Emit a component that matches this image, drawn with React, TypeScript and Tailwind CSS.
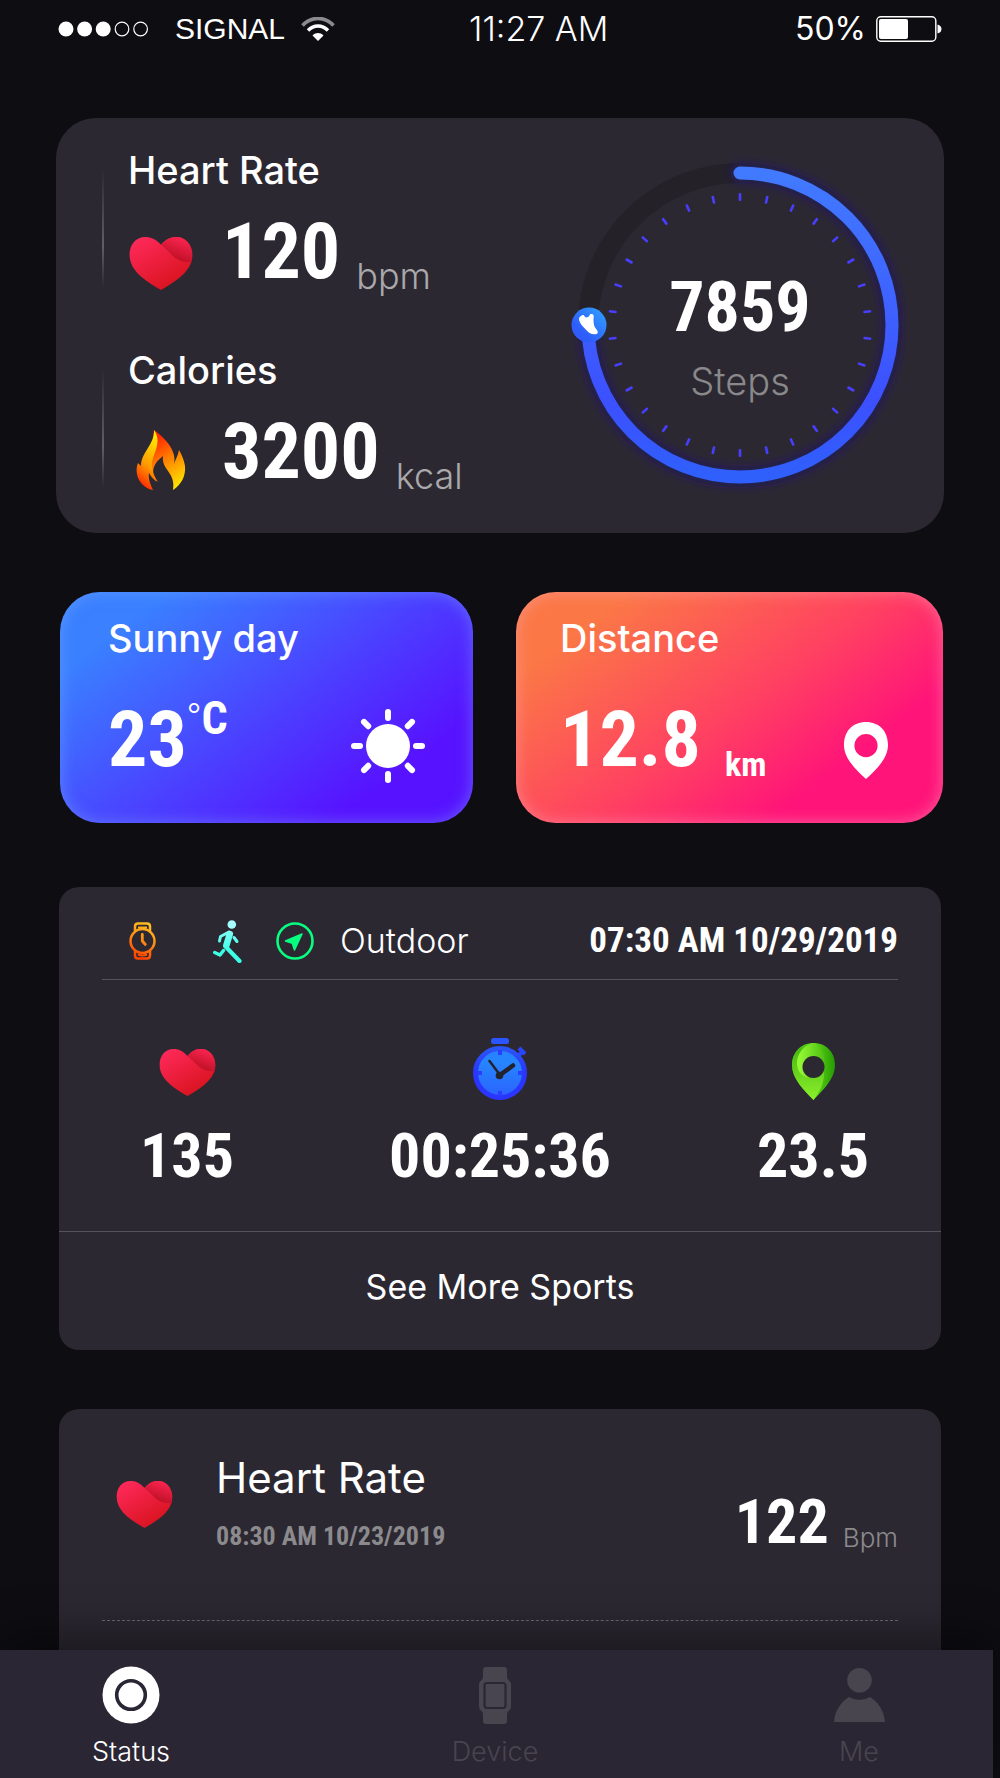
import { useId } from "react";
import type { ReactNode } from "react";

const digits = "font-['Roboto_Condensed','Liberation_Sans_Narrow',sans-serif] font-bold";

function HeartIcon({ className }: { className: string }) {
  const id = useId();
  return (
    <svg viewBox="0 0 64 54" className={className} aria-hidden="true">
      <defs>
        <linearGradient id={id + "a"} x1="0.1" y1="0" x2="0.8" y2="1">
          <stop offset="0" stopColor="#ff2a5c" />
          <stop offset="1" stopColor="#d51118" />
        </linearGradient>
        <linearGradient id={id + "b"} x1="0.8" y1="0" x2="0.45" y2="0.8">
          <stop offset="0" stopColor="#ff2754" />
          <stop offset="1" stopColor="#c5122a" />
        </linearGradient>
      </defs>
      <path fill={`url(#${id}a)`} d="M32 8C27 2 21 0 16 0 6 0 0 8 0 18c0 15 13 25 32 36 19-11 32-21 32-36C64 8 57 0 48 0c-6 0-11 2-16 8Z" />
      <path fill={`url(#${id}b)`} d="M32 8c11 9 17 20 31 17C66 9 57 0 48 0c-6 0-11 2-16 8Z" />
    </svg>
  );
}

function FlameIcon() {
  return (
    <svg viewBox="0 0 50 60" className="h-[60px] w-[50px]" aria-hidden="true">
      <defs>
        <linearGradient id="flameRight" x1="0.3" y1="0" x2="0.7" y2="1">
          <stop offset="0.1" stopColor="#ff2a00" />
          <stop offset="0.5" stopColor="#ff8200" />
          <stop offset="1" stopColor="#ffe600" />
        </linearGradient>
        <linearGradient id="flameLeft" x1="0.7" y1="0" x2="0.4" y2="1">
          <stop offset="0" stopColor="#fff000" />
          <stop offset="0.6" stopColor="#ff9a00" />
          <stop offset="1" stopColor="#ff2200" />
        </linearGradient>
      </defs>
      <path fill="url(#flameRight)" d="M18 0c12 9 23 21 20 34 1-4 4-8 5-14 3 5 5 10 6 16 1 10-4 19-12 24 3-18-12-20-10-34-9 7-13 14-7 26L12 40Z" />
      <path fill="url(#flameLeft)" d="M18 0c1 14-13 22-13 36l-3-3C-3 46 6 58 17 60c-3-6-5-12-4-17 2 4 5 7 9 9-5-8-8-14-5-24 3-9 8-18 1-28Z" />
    </svg>
  );
}

function PinIcon({ className }: { className: string }) {
  return (
    <svg viewBox="0 0 44 57" className={className} aria-hidden="true">
      <path fill="currentColor" fillRule="evenodd" d="M22 0C9 0 0 9 0 23c0 13 11 24 22 34 11-10 22-21 22-34C44 9 35 0 22 0Zm0 12a11.6 11.6 0 1 1 0 23.2a11.6 11.6 0 0 1 0-23.2Z" />
    </svg>
  );
}

function GreenPinIcon() {
  return (
    <svg viewBox="0 0 43 57" className="h-[57px] w-[43px]" aria-hidden="true">
      <defs>
        <linearGradient id="pinBase" x1="0" y1="0" x2="1" y2="0">
          <stop offset="0" stopColor="#3eae10" />
          <stop offset="0.5" stopColor="#62d81a" />
          <stop offset="1" stopColor="#259a03" />
        </linearGradient>
        <linearGradient id="pinTip" x1="0" y1="0" x2="0" y2="1">
          <stop offset="0" stopColor="#47b80f" />
          <stop offset="1" stopColor="#8cf02c" />
        </linearGradient>
        <linearGradient id="pinShine" x1="0" y1="0.4" x2="1" y2="0.4">
          <stop offset="0.1" stopColor="#93f733" />
          <stop offset="1" stopColor="#4cc012" />
        </linearGradient>
      </defs>
      <path fill="url(#pinBase)" d="M21.5 0C9 0 0 9 0 22c0 14 12 25 21.5 35C31 47 43 36 43 22 43 9 34 0 21.5 0Z" />
      <path fill="url(#pinTip)" d="M0 22c0 14 12 25 21.5 35C28 48 33 40 32 26c-4 10-14 12-21 6C5 27 5 14 10 4 4 8 0 14 0 22Z" />
      <path fill="url(#pinShine)" d="M21.5 0C12 2 4 11 5 22c1 7 5 12 12 13l4-11 11-2C34 14 30 4 21.5 0Z" />
      <circle cx="21.5" cy="24" r="11" fill="#2c2832" />
    </svg>
  );
}

function StopwatchIcon() {
  return (
    <svg viewBox="0 0 54 62" className="h-[62px] w-[54px]" aria-hidden="true">
      <defs>
        <linearGradient id="watchFace" x1="0" y1="0" x2="0" y2="1">
          <stop offset="0.3" stopColor="#2684ff" />
          <stop offset="1" stopColor="#2b62ff" />
        </linearGradient>
        <linearGradient id="watchRim" x1="0" y1="0" x2="0" y2="1">
          <stop offset="0" stopColor="#2a55f5" />
          <stop offset="0.5" stopColor="#2a35ff" />
        </linearGradient>
      </defs>
      <rect x="18" y="0" width="18" height="6" rx="2.5" fill="#2a55ff" />
      <path d="m46 10 6 6M45 18l4-4" stroke="#2a45ff" strokeWidth="4" />
      <circle cx="27" cy="35" r="24.5" fill="url(#watchFace)" stroke="url(#watchRim)" strokeWidth="5" />
      <path d="M27 12v5M27 53v5M4 35h5M45 35h5" stroke="#2a3dff" strokeWidth="4" />
      <path d="M27 37 16.5 23" stroke="#232330" strokeWidth="2.5" strokeLinecap="round" />
      <path d="M25.5 38 40 27.5" stroke="#232330" strokeWidth="4.5" strokeLinecap="round" />
      <circle cx="26.5" cy="37.5" r="3.8" fill="#232330" />
    </svg>
  );
}

function WatchIcon() {
  return (
    <svg viewBox="0 0 27 38" className="h-[38px] w-[27px]" fill="none" stroke="url(#band)" aria-hidden="true">
      <defs>
        <linearGradient id="band" gradientUnits="userSpaceOnUse" x1="22" y1="0" x2="6" y2="38">
          <stop offset="0" stopColor="#ffc823" />
          <stop offset="0.5" stopColor="#ff8a12" />
          <stop offset="0.9" stopColor="#ff4300" />
        </linearGradient>
      </defs>
      <circle cx="13.5" cy="19" r="12" strokeWidth="2.5" />
      <path strokeWidth="2.5" d="M6 9V4.500Q6 1.500 9 1.500h9q3 0 3 3V9M6 29v4.500q0 3 3 3h9q3 0 3-3V29" />
      <path strokeWidth="2" d="M9 5.500h9M9 32.500q4.500 2 9 0" />
      <path strokeWidth="2.8" strokeLinecap="round" strokeLinejoin="round" d="M13.300 12.500V19l3 3.500" />
    </svg>
  );
}

function RunnerIcon() {
  return (
    <svg viewBox="0 0 29 43" className="h-[43px] w-[29px]" fill="none" stroke="url(#runner)" strokeLinecap="round" strokeLinejoin="round" aria-hidden="true">
      <defs>
        <linearGradient id="runner" gradientUnits="userSpaceOnUse" x1="0" y1="0" x2="0" y2="43">
          <stop offset="0" stopColor="#a5fdff" />
          <stop offset="0.7" stopColor="#3dffe6" />
        </linearGradient>
      </defs>
      <circle cx="18.8" cy="4.5" r="4.3" fill="#a5fdff" stroke="none" />
      <path strokeWidth="6.5" d="m16.800 14-3.500 11.500" />
      <path strokeWidth="3" d="M16 12 7.500 16.500l-1 4.500M21 17.500l3 4" />
      <path strokeWidth="4.2" d="m13 27 13.500 14" />
      <path strokeWidth="3.4" d="M10.500 30.500 7 35l-5.300-2.500" />
    </svg>
  );
}

function CompassIcon() {
  return (
    <svg viewBox="0 0 38 38" className="size-[38px]" aria-hidden="true">
      <circle cx="19" cy="19" r="17.5" fill="none" stroke="#07ff80" strokeWidth="2.6" />
      <path d="M26 12 18.500 28l-2.200-6.800L9.500 19Z" fill="#07ff80" stroke="#07ff80" strokeWidth="1.5" strokeLinejoin="round" />
    </svg>
  );
}

function SunIcon() {
  return (
    <svg viewBox="0 0 74 74" className="mb-1 size-[74px]" aria-hidden="true">
      <circle cx="37" cy="37" r="22" fill="#fff" />
      {[0, 45, 90, 135, 180, 225, 270, 315].map((a) => (
        <rect key={a} x="34" y="0" width="6" height="12" rx="3" fill="#fff" transform={`rotate(${a} 37 37)`} />
      ))}
    </svg>
  );
}

function StatusBar() {
  return (
    <header className="flex h-[54px] items-center px-[58px] pt-1 text-white">
      <svg viewBox="0 0 91 16" className="h-4 w-[91px]" aria-hidden="true">
        {[8, 26.6, 45.2].map((x) => <circle key={x} cx={x} cy="8" r="7.5" fill="#fff" />)}
        {[64, 82.6].map((x) => <circle key={x} cx={x} cy="8" r="6.8" fill="none" stroke="#fff" strokeWidth="1.2" />)}
      </svg>
      <span className="ml-[26px] font-['Liberation_Sans',sans-serif] text-[30px] leading-none">SIGNAL</span>
      <svg viewBox="0 0 34 24" className="ml-4 h-6 w-[34px]" fill="none" aria-hidden="true">
        <path d="M1.500 8.500C10-1 24-1 32.500 8.500" stroke="#8b8b8f" strokeWidth="3.5" />
        <path d="M7 13.500c6-6 14-6 20 0" stroke="#fff" strokeWidth="3.5" />
        <path d="M11.500 18.500c3.500-3.200 7.500-3.200 11 0L17 24Z" fill="#fff" />
      </svg>
      <time className="ml-[134px] text-[34px] leading-none font-light">11:27 AM</time>
      <span className="ml-auto text-[32px] leading-none">50%</span>
      <svg viewBox="0 0 66 26" className="ml-2.5 h-[26px] w-[66px]" aria-hidden="true">
        <rect x="0.8" y="0.8" width="59" height="24.4" rx="4" fill="none" stroke="#fff" strokeWidth="1.4" />
        <rect x="3" y="3" width="29" height="20" rx="2" fill="#fff" />
        <path d="M61.500 8.500q4 1 4 4.500t-4 4.500Z" fill="#fff" />
      </svg>
    </header>
  );
}

type MetricProps = { title: string; value: string; unit: string; icon: ReactNode };

function Metric({ title, value, unit, icon }: MetricProps) {
  return (
    <div className="flex gap-6">
      <div className="mt-5 mb-2 w-0.5 bg-linear-to-b from-transparent via-white/25 via-65% to-transparent" />
      <div>
        <h2 className="text-[38px] leading-[44px] font-medium">{title}</h2>
        <div className="mt-6 flex h-20 items-end">
          <div className="mb-1.5 flex w-[66px] justify-center">{icon}</div>
          <span className={`${digits} mb-2 ml-7 text-[78px] leading-[72px]`}>{value}</span>
          <span className="ml-4 text-[36px] leading-10 font-light text-[#a9a9ab]">{unit}</span>
        </div>
      </div>
    </div>
  );
}

function StepsRing() {
  const ticks = Array.from({ length: 30 }, (_, i) => i * 12);
  return (
    <div className="mt-1.5 mr-[34px] grid size-[340px] shrink-0 self-center">
      <svg viewBox="10 10 340 340" className="[grid-area:1/1]" fill="none" aria-hidden="true">
        <defs>
          <linearGradient id="ring" x1="0" y1="0" x2="0" y2="1">
            <stop offset="0" stopColor="#417aff" />
            <stop offset="0.75" stopColor="#3c50ff" />
            <stop offset="1" stopColor="#2f60fb" />
          </linearGradient>
          <linearGradient id="knob" x1="0" y1="1" x2="1" y2="0">
            <stop offset="0.3" stopColor="#2f5dfb" />
            <stop offset="1" stopColor="#2fa5ff" />
          </linearGradient>
          <filter id="glow" x="-20%" y="-20%" width="140%" height="140%">
            <feGaussianBlur stdDeviation="4" />
          </filter>
        </defs>
        <circle cx="180" cy="180" r="152" stroke="#242129" strokeWidth="20" />
        <path d="M180 28a152 152 0 1 1-152 152" stroke="#2317a0" strokeOpacity="0.4" strokeWidth="20" strokeLinecap="round" filter="url(#glow)" />
        <path d="M180 28a152 152 0 1 1-152 152" stroke="url(#ring)" strokeWidth="13" strokeLinecap="round" />
        {ticks.map((a) => (
          <rect key={a} x="178.7" y="48" width="2.6" height="8" rx="1" fill="#473fff" transform={`rotate(${a} 180 180)`} />
        ))}
        <circle cx="29" cy="180" r="17.5" fill="url(#knob)" />
        <path fill="#fff" d="M19 174c0-2 4-5 5-3.500s1.500 2.500 4 1.500c2-.8 1-3 3.500-3s2.500 2.500 2 4.500c0 6 .5 8 3.500 11.500 1.500 2.500 1 4-2 4.300-3.500.3-6-1.300-8.500-4-3-3.500-7-6.500-7.500-11.300Z" />
      </svg>
      <div className="z-10 flex flex-col items-center justify-center pt-7 [grid-area:1/1]">
        <span className={`${digits} text-[70px] leading-16`}>7859</span>
        <span className="mt-5 text-[38px] leading-[44px] font-light text-[#89888a]">Steps</span>
      </div>
    </div>
  );
}

type StatProps = { icon: ReactNode; value: string };

function Stat({ icon, value }: StatProps) {
  return (
    <div className="flex min-w-32 flex-col items-center">
      <div className="flex h-16 items-end">{icon}</div>
      <span className={`${digits} mt-6 text-[62px] leading-16`}>{value}</span>
    </div>
  );
}

type TabProps = { label: string; icon: ReactNode; active?: boolean };

function Tab({ label, icon, active }: TabProps) {
  return (
    <a href="#" aria-current={active ? "page" : undefined} className={`flex w-32 flex-col items-center ${active ? "text-white" : "text-[#48454e]"}`}>
      <span className="flex h-[58px] items-center">{icon}</span>
      <span className="mt-3 text-[27px] leading-8 font-light">{label}</span>
    </a>
  );
}

export default function App() {
  return (
    <div className="flex h-screen flex-col bg-[#0e0d12] font-['Inter',sans-serif] text-white">
      <StatusBar />

      <main className="min-h-0 flex-1 overflow-hidden pt-16">
        <section className="mx-14 flex justify-between rounded-[40px] bg-[#2c2832] pt-[30px] pb-[37px] pl-[46px]">
          <div className="flex flex-col gap-[52px]">
            <Metric title="Heart Rate" value="120" unit="bpm" icon={<HeartIcon className="h-[53px] w-16" />} />
            <Metric title="Calories" value="3200" unit="kcal" icon={<FlameIcon />} />
          </div>
          <StepsRing />
        </section>

        <div className="mt-[59px] grid grid-cols-[413fr_427fr] gap-[43px] pr-[57px] pl-[60px]">
          <section className="rounded-[40px] bg-linear-[143deg,#3a80ff_15%,#4b40ff_52%,#5713ff_80%] px-12 pt-6 pb-9 shadow-[inset_0_0_16px_rgba(120,170,255,0.5)]">
            <h2 className="text-[38px] leading-[44px] font-medium">Sunny day</h2>
            <div className="mt-9 flex items-end justify-between">
              <div className="flex h-[91px] items-start">
                <span className={`${digits} mt-2 text-[78px] leading-[72px]`}>23</span>
                <span className="text-[32px] leading-10 font-light">°</span>
                <span className={`${digits} text-[46px] leading-[44px]`}>C</span>
              </div>
              <SunIcon />
            </div>
          </section>

          <section className="rounded-[40px] bg-linear-[143deg,#fb7846_15%,#ff4062_52%,#ff1479_76%] pt-6 pr-[55px] pb-9 pl-11 shadow-[inset_0_0_16px_rgba(255,170,190,0.5)]">
            <h2 className="text-[38px] leading-[44px] font-medium">Distance</h2>
            <div className="mt-9 flex items-end justify-between">
              <div className="flex h-[91px] items-start">
                <span className={`${digits} mt-2 text-[78px] leading-[72px]`}>12.8</span>
                <span className={`${digits} mt-12 ml-6 text-[34px] leading-10`}>km</span>
              </div>
              <PinIcon className="mb-2 h-[57px] w-11" />
            </div>
          </section>
        </div>

        <section className="mx-[59px] mt-16 rounded-[20px] bg-[#2c2832]">
          <div className="mx-[43px] flex h-[93px] items-center border-b border-[#56535d] pt-4">
            <div className="ml-[27px] flex items-center">
              <WatchIcon />
              <span className="ml-[57px]"><RunnerIcon /></span>
              <span className="ml-[34px]"><CompassIcon /></span>
            </div>
            <h3 className="ml-[26px] text-[34px] leading-10 font-light">Outdoor</h3>
            <time className={`${digits} ml-auto text-[35px] leading-10`}>07:30 AM 10/29/2019</time>
          </div>
          <div className="flex justify-between px-16 pt-14 pb-[43px]">
            <Stat icon={<HeartIcon className="mb-1 h-[47px] w-[57px]" />} value="135" />
            <Stat icon={<StopwatchIcon />} value="00:25:36" />
            <Stat icon={<GreenPinIcon />} value="23.5" />
          </div>
          <button type="button" className="flex h-[119px] w-full items-center justify-center border-t border-[#56535d] pb-2 text-[34px] leading-10">
            See More Sports
          </button>
        </section>

        <section className="mx-[59px] mt-[59px] rounded-t-[20px] bg-[#2c2832] px-[43px] pt-[45px] pb-24">
          <div className="flex border-b border-dashed border-[#6b6971] pb-[66px]">
            <HeartIcon className="ml-3.5 h-[47px] w-[57px] self-center" />
            <div className="ml-[43px]">
              <h2 className="text-[42px] leading-12">Heart Rate</h2>
              <time className={`${digits} mt-4 block text-[26px] leading-9 text-[#8b8a8d]`}>08:30 AM 10/23/2019</time>
            </div>
            <div className="ml-auto flex items-end">
              <span className={`${digits} text-[62px] leading-16`}>122</span>
              <span className="ml-3.5 text-[26px] leading-8 font-light text-[#8b8a8d]">Bpm</span>
            </div>
          </div>
        </section>
      </main>

      <nav className="z-10 mr-[7px] flex shrink-0 justify-between bg-[#2b2634] pt-4 pr-[70px] pb-2.5 pl-[67px] shadow-[0_-16px_40px_rgba(0,0,0,0.4)]">
        <Tab
          active
          label="Status"
          icon={
            <svg viewBox="0 0 58 58" className="size-[58px]" aria-hidden="true">
              <circle cx="29" cy="29" r="28.5" fill="currentColor" />
              <circle cx="29" cy="29" r="14.3" fill="none" stroke="#2b2634" strokeWidth="3.6" />
            </svg>
          }
        />
        <Tab
          label="Device"
          icon={
            <svg viewBox="0 0 32 57" className="h-[57px] w-8" aria-hidden="true">
              <path fill="currentColor" d="M7 0h18q3 0 3 3v7q0 2 2 3.500t2 4v22q0 2.500-2 4T28 47v7q0 3-3 3H7q-3 0-3-3v-7q0-2-2-3.500t-2-4v-22q0-2.500 2-4T4 10V3q0-3 3-3Z" />
              <rect x="5.5" y="16" width="21" height="25" rx="2.5" fill="none" stroke="#2b2634" strokeWidth="2.2" />
            </svg>
          }
        />
        <Tab
          label="Me"
          icon={
            <svg viewBox="0 0 51 54" className="h-[54px] w-[51px]" aria-hidden="true">
              <circle cx="25.5" cy="12.3" r="12.3" fill="currentColor" />
              <path fill="currentColor" d="M0 54c1-12 7-20 15-25q10.500 6 21 0c8 5 14 13 15 25Z" />
            </svg>
          }
        />
      </nav>
    </div>
  );
}
